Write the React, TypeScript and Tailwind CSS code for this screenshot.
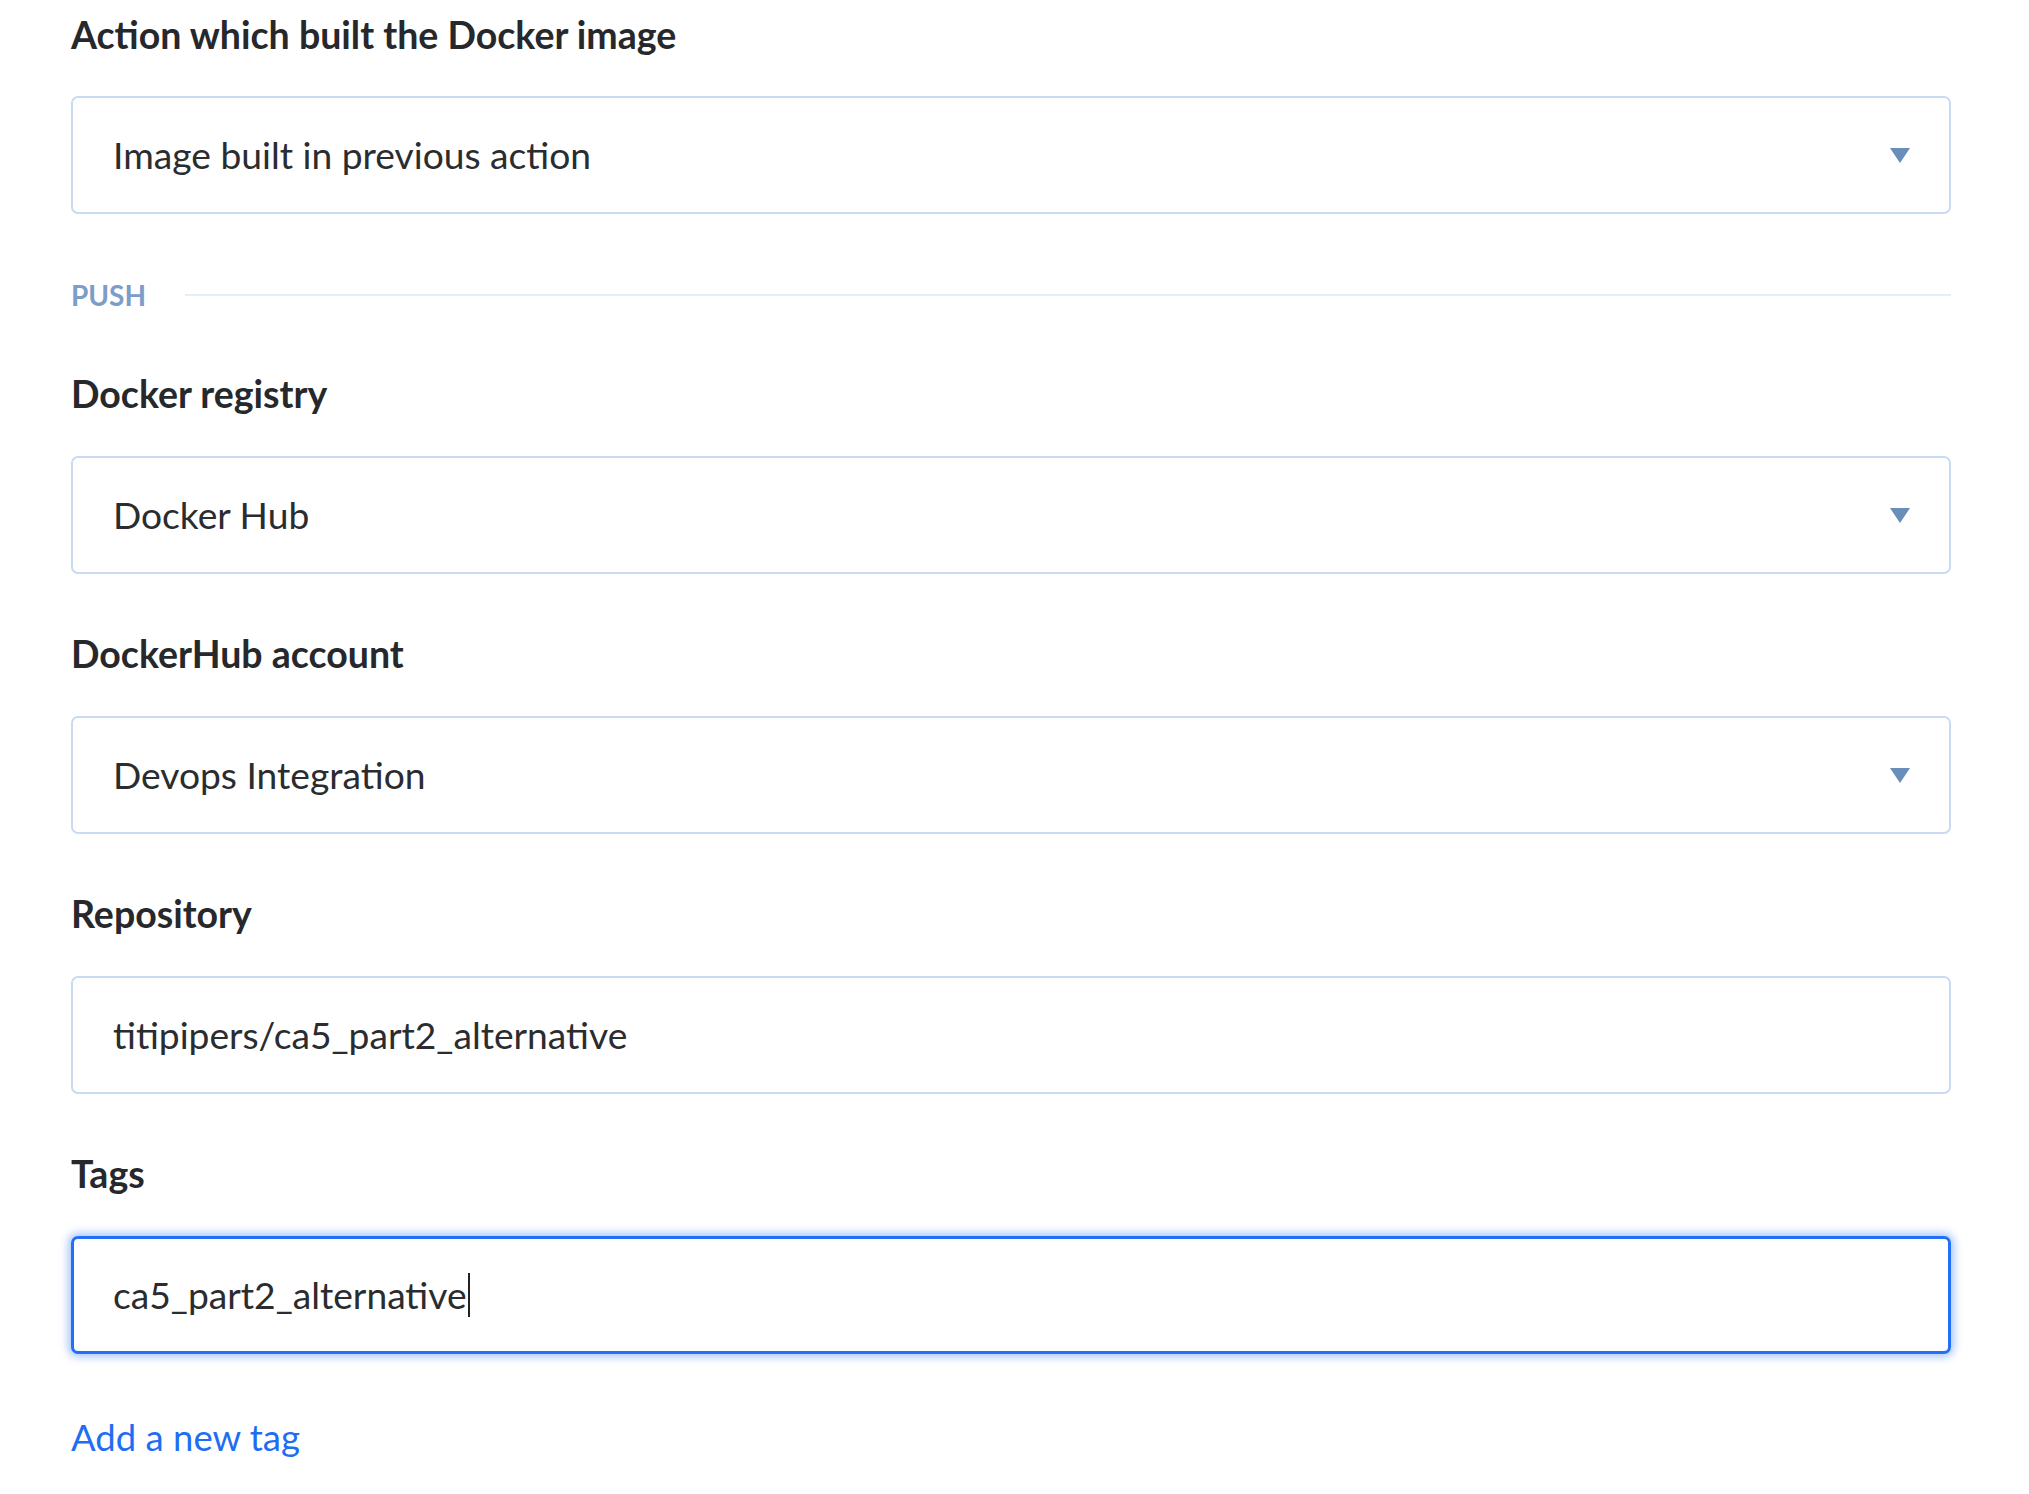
import React from "react";

function Caret() {
  return (
    <svg width="20" height="15" viewBox="0 0 20 15" className="shrink-0">
      <polygon points="0,0 20,0 10,15" fill="#6a8eba" />
    </svg>
  );
}

function Label({ children, className = "" }: { children: React.ReactNode; className?: string }) {
  return (
    <div className={"text-[37.5px] leading-[48px] font-bold text-[#26282b] " + className}>{children}</div>
  );
}

function SelectBox({ value, className = "" }: { value: string; className?: string }) {
  return (
    <div
      className={
        "h-[118px] flex items-center justify-between rounded-[7px] border-2 border-[#c8daf4] bg-white pl-[40px] pr-[39px] " +
        className
      }
    >
      <span className="text-[37.2px] text-[#2a2c2f]">{value}</span>
      <Caret />
    </div>
  );
}

function InputBox({ value, focused = false, className = "" }: { value: string; focused?: boolean; className?: string }) {
  return (
    <div
      className={
        (focused
          ? "border-[3px] border-[#2270f5] shadow-[0_0_8px_3px_rgba(34,112,245,0.4)] pl-[39px] "
          : "border-2 border-[#c8daf4] pl-[40px] ") +
        "h-[118px] flex items-center rounded-[7px] bg-white " +
        className
      }
    >
      <span className="text-[37.2px] text-[#2a2c2f]">{value}</span>
      {focused && <span className="ml-[1px] h-[44px] w-[2px] bg-[#222]" />}
    </div>
  );
}

export default function App() {
  return (
    <div className="min-h-[1494px] w-full bg-white font-['Lato',sans-serif] pl-[71px] pr-[78px] pt-[11px]">
      <Label>Action which built the Docker image</Label>
      <SelectBox value="Image built in previous action" className="mt-[37px]" />

      <div className="mt-[63px] h-[36px] flex items-center gap-[39px]">
        <span className="text-[28px] font-bold text-[#7b9dc7] leading-[36px]">PUSH</span>
        <div className="h-[2px] flex-1 bg-[#e3eefb]" />
      </div>

      <Label className="mt-[57px]">Docker registry</Label>
      <SelectBox value="Docker Hub" className="mt-[38px]" />

      <Label className="mt-[56px]">DockerHub account</Label>
      <SelectBox value="Devops Integration" className="mt-[38px]" />

      <Label className="mt-[56px]">Repository</Label>
      <InputBox value="titipipers/ca5_part2_alternative" className="mt-[38px]" />

      <Label className="mt-[56px]">Tags</Label>
      <InputBox value="ca5_part2_alternative" focused className="mt-[38px]" />

      <div className="mt-[56px] text-[36.5px] text-[#1f6ef2]">Add a new tag</div>
    </div>
  );
}
